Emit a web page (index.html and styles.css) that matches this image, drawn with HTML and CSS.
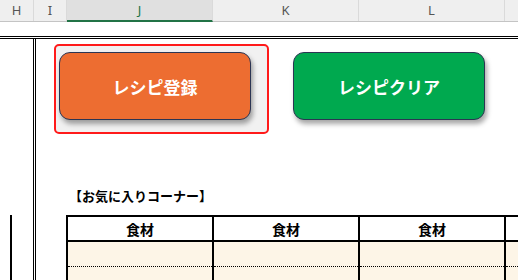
FILE: index.html
```html
<!DOCTYPE html>
<html lang="ja">
<head>
    <meta charset="UTF-8">
    <meta name="viewport" content="width=device-width, initial-scale=1.0">
    <title>レシピ</title>
    <link rel="stylesheet" href="styles.css">
</head>
<body>
    <div class="colheads">
        <div class="colhead w-h">H</div>
        <div class="colhead w-i">I</div>
        <div class="colhead w-col selected">J</div>
        <div class="colhead w-col">K</div>
        <div class="colhead w-col">L</div>
        <div class="colhead w-rest"></div>
    </div>

    <div class="sheet">
        <div class="frame">
            <div class="side">
                <div class="side-line"></div>
            </div>
            <div class="content">
                <div class="buttons">
                    <div class="selection">
                        <div class="btn btn-orange">レシピ登録</div>
                    </div>
                    <div class="btn btn-green">レシピクリア</div>
                </div>

                <div class="corner-title">【お気に入りコーナー】</div>

                <table class="fav">
                    <tr>
                        <th>食材</th>
                        <th>食材</th>
                        <th>食材</th>
                        <th></th>
                    </tr>
                    <tr class="row">
                        <td></td><td></td><td></td><td></td>
                    </tr>
                    <tr class="row">
                        <td></td><td></td><td></td><td></td>
                    </tr>
                </table>
            </div>
        </div>
    </div>
</body>
</html>
```

FILE: styles.css
```css
html, body {
    margin: 0;
    padding: 0;
}
body {
    width: 518px;
    height: 280px;
    overflow: hidden;
    background: #fff;
    font-family: "Noto Sans CJK JP", "Noto Sans", sans-serif;
}
.colheads {
    display: flex;
    height: 21px;
    background: #efefef;
    border-bottom: 1px solid #c4c4c4;
}
.colhead {
    flex: none;
    box-sizing: border-box;
    height: 21px;
    border-right: 1px solid #dadada;
    font-family: "Noto Sans", sans-serif;
    font-size: 13px;
    line-height: 21px;
    color: #555;
    text-align: center;
}
.w-h { width: 34px; }
.w-i { width: 33px; }
.w-col { width: 146px; }
.w-rest { flex: 1; border-right: none; }
.colhead.selected {
    background: #e0e0e0;
    color: #217346;
    border-bottom: 2px solid #217346;
    height: 22px;
    margin-bottom: -1px;
}
.sheet {
    padding-top: 14px;
}
.frame {
    display: flex;
    border-top: 3px double #000;
    height: 241px;
    overflow: hidden;
}
.side {
    width: 33px;
    flex: none;
}
.side-line {
    margin: 176px 0 0 10px;
    width: 2px;
    height: 70px;
    background: #000;
}
.content {
    flex: 1;
    min-width: 0;
    overflow: hidden;
    border-left: 3px double #000;
}
.buttons {
    display: flex;
    align-items: flex-start;
    padding: 5px 0 0 18px;
}
.selection {
    border: 2px solid #ff1a1a;
    border-radius: 5px;
    padding: 6px 16px 12px 3px;
    background: #f1f1f1;
}
.btn {
    width: 190px;
    height: 66px;
    border: 1px solid #2b3553;
    border-radius: 11px;
    color: #fff;
    font-size: 17px;
    font-weight: bold;
    display: flex;
    align-items: center;
    justify-content: center;
    box-shadow: 2px 4px 5px rgba(0, 0, 0, 0.35);
}
.btn-orange {
    background: #ed6d31;
}
.btn-green {
    background: #00a94f;
    margin: 8px 0 0 24px;
}
.corner-title {
    margin: 53px 0 0 33px;
    font-size: 13px;
    font-weight: bold;
    line-height: 17px;
    color: #000;
}
.fav {
    margin: 11px 0 0 30px;
    border-collapse: collapse;
    table-layout: fixed;
    width: 584px;
}
.fav th {
    width: 144px;
    height: 23px;
    padding: 0;
    border: 2px solid #000;
    background: #fff;
    font-size: 14px;
    font-weight: bold;
    text-align: center;
}
.fav td {
    height: 24px;
    padding: 0;
    background: #fdf5e7;
    border-left: 2px solid #000;
    border-right: 2px solid #000;
    border-bottom: 1px dotted #000;
}
```
